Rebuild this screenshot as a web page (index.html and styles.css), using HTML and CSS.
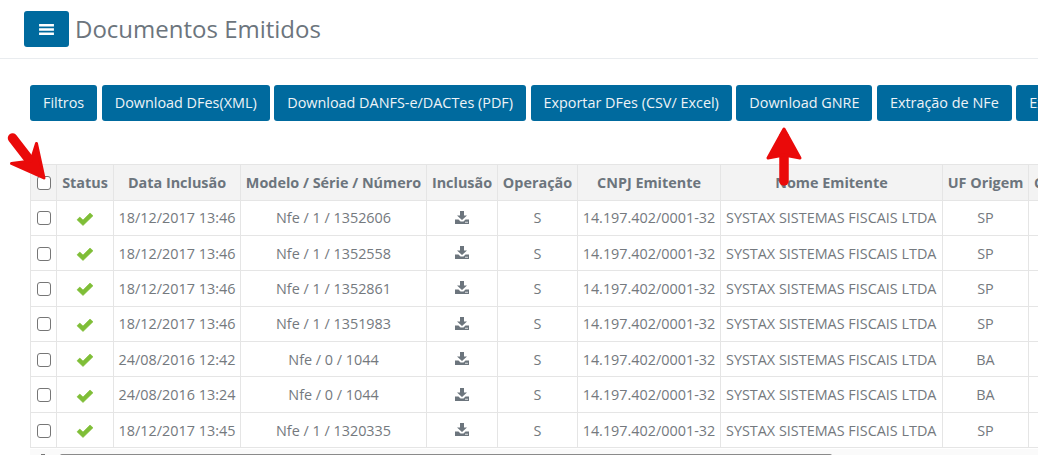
FILE: index.html
```html
<!DOCTYPE html>
<html lang="pt-BR">
<head>
<meta charset="utf-8">
<title>Documentos Emitidos</title>
<link rel="stylesheet" href="styles.css">
</head>
<body>
<header class="topbar">
  <button class="menu-btn" aria-label="Menu">
    <svg class="menu-icon" viewBox="0 0 16 14"><path d="M0 1.2h16v2.6H0zM0 5.7h16v2.6H0zM0 10.2h16v2.6H0z"/></svg>
  </button>
  <h1 class="title">Documentos Emitidos</h1>
</header>
<main class="content">
  <div class="toolbar">
    <button class="btn">Filtros</button>
    <button class="btn">Download DFes(XML)</button>
    <button class="btn">Download DANFS-e/DACTes (PDF)</button>
    <button class="btn">Exportar DFes (CSV/ Excel)</button>
    <button class="btn">Download GNRE</button>
    <button class="btn">Extração de NFe</button>
    <button class="btn">Ex</button>
  </div>
  <div class="table-wrap">
    <table class="grid">
      <colgroup>
        <col class="c-check"><col class="c-status"><col class="c-date"><col class="c-model"><col class="c-inc"><col class="c-op"><col class="c-cnpj"><col class="c-name"><col class="c-uf"><col class="c-rest">
      </colgroup>
      <thead>
        <tr><th><span class="box"></span></th><th>Status</th><th>Data Inclusão</th><th>Modelo / Série / Número</th><th>Inclusão</th><th>Operação</th><th>CNPJ Emitente</th><th>Nome Emitente</th><th>UF Origem</th><th>C</th></tr>
      </thead>
      <tbody id="rows"></tbody>
    </table>
  </div>
  <div class="scrollbar"><span class="scroll-arrow"></span><span class="thumb"></span></div>
</main>
<svg class="arrow arrow-diag" viewBox="0 0 44 50"><path d="M4.500 5 L30 38" class="shaft"/><path d="M3.500 30.500 L36 45 L28.500 10.500 L23 28 Z" class="fill"/></svg>
<svg class="arrow arrow-up" viewBox="0 0 36 62"><path d="M18 10V55" class="shaft"/><path d="M2 32 L18 3 L34 32 L18 29 Z" class="fill"/></svg>
<script src="rows.js"></script>
</body>
</html>
```
FILE: rows.js
```js
var data = [
  ["18/12/2017 13:46", "Nfe / 1 / 1352606", "SP"],
  ["18/12/2017 13:46", "Nfe / 1 / 1352558", "SP"],
  ["18/12/2017 13:46", "Nfe / 1 / 1352861", "SP"],
  ["18/12/2017 13:46", "Nfe / 1 / 1351983", "SP"],
  ["24/08/2016 12:42", "Nfe / 0 / 1044", "BA"],
  ["24/08/2016 13:24", "Nfe / 0 / 1044", "BA"],
  ["18/12/2017 13:45", "Nfe / 1 / 1320335", "SP"]
];
var check = '<svg class="check" viewBox="0 0 18 14"><path d="M1 7.800 L3.800 5 L7 8 L14 1 L17 3.800 L7 13.500 Z" /></svg>';
var dl = '<svg class="dl" viewBox="0 0 14 13"><path d="M5 0h4v4.500h3L7 9 2 4.500h3z"/><path d="M0 8.500h3.500L5.500 10.500h3L10.500 8.500H14V13H0z"/><path class="dl-dot" d="M10 10.800h3v.8h-3z"/></svg>';
document.getElementById("rows").innerHTML = data.map(function (r) {
  return '<tr><td><span class="box"></span></td><td>' + check + '</td><td>' + r[0] + '</td><td>' + r[1] +
    '</td><td>' + dl + '</td><td>S</td><td>14.197.402/0001-32</td><td class="left">SYSTAX SISTEMAS FISCAIS LTDA</td><td>' + r[2] + '</td><td></td></tr>';
}).join("");
```
FILE: styles.css
```css
* { box-sizing: border-box; }
html, body { margin: 0; height: 100%; overflow: hidden; background: #fff; }
body { font-family: "Open Sans", sans-serif; color: #6c757d; position: relative; }

.topbar {
  height: 59px;
  padding: 11px 24px 0;
  border-bottom: 1px solid #e9ecef;
  display: flex;
  align-items: flex-start;
  gap: 6px;
}
.menu-btn {
  width: 45px; height: 36px; padding: 0; border: 0; border-radius: 3px;
  background: #006a9e; display: flex; align-items: center; justify-content: center;
}
.menu-icon { width: 15px; height: 13px; fill: #fff; }
.title { margin: 0; font-size: 24px; font-weight: 400; line-height: 36px; color: #6c757d; }

.content { padding: 26px 0 0 30px; }
.toolbar { display: flex; gap: 4.500px; white-space: nowrap; width: 1008px; overflow: hidden; }
.btn {
  height: 36px; padding: 0 13px 1px; border: 0; border-radius: 3px;
  background: #006a9e; color: #eef3f7;
  font: 400 14.400px "Open Sans", sans-serif;
  flex: none;
}
.btn:last-child { width: 40px; text-align: left; }

.table-wrap { margin-top: 43px; width: 1008px; overflow: hidden; }
.grid { border-collapse: collapse; table-layout: fixed; width: 1008px; font-size: 14.400px; }
.c-check { width: 26px; } .c-status { width: 57px; } .c-date { width: 127px; }
.c-model { width: 186px; } .c-inc { width: 71px; } .c-op { width: 80px; }
.c-cnpj { width: 143px; } .c-name { width: 222px; } .c-uf { width: 86px; } .c-rest { width: 10px; }
.grid th, .grid td {
  border: 1px solid #e5e5e5; padding: 0; text-align: center; white-space: nowrap; overflow: hidden;
}
.grid th { height: 35.500px; background: #f3f3f3; font-weight: 700; color: #6c757d; }
.grid td { height: 35.400px; color: #74797e; }
.grid td.left { text-align: left; padding-left: 5px; }
.grid th:last-child { text-align: left; padding-left: 5px; }

.box {
  display: block; width: 14px; height: 14px; margin: 1px auto 0;
  border: 1px solid #767676; border-radius: 3px; background: #fff;
}
.check { display: block; width: 18px; height: 14px; margin: 2px auto 0; fill: #7fbe37; stroke: #7fbe37; stroke-width: .6px; stroke-linejoin: round; }
.dl { display: block; width: 14px; height: 13px; margin: -1px auto 0; fill: #6c757d; }
.dl-dot { fill: #fff; }

.scrollbar { position: relative; height: 6px; margin-top: 1px; padding-top: 0; background: #fafafa; width: 1008px; height: 7px; }
.thumb { position: absolute; left: 30px; width: 772px; bottom: 0; height: 2px; background: #8a8a8a; border-radius: 2px 2px 0 0; }
.scroll-arrow { position: absolute; left: 11px; bottom: 0; width: 4px; height: 2px; background: #777; }

.arrow { position: absolute; overflow: visible; }
.shaft { fill: none; stroke: #ea0a0a; stroke-width: 9.500px; stroke-linecap: round; }
.fill { fill: #ea0a0a; stroke: #ea0a0a; stroke-width: 3px; stroke-linejoin: round; }
.arrow-diag { left: 8px; top: 133px; width: 44px; height: 50px; }
.arrow-up { left: 766px; top: 126px; width: 36px; height: 62px; }
```
